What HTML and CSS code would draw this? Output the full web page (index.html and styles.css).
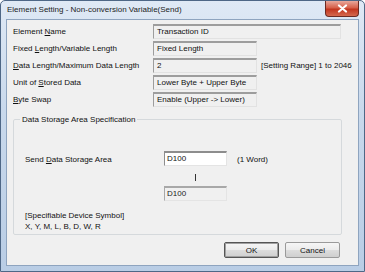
FILE: index.html
```html
<!DOCTYPE html>
<html lang="en">
<head>
  <meta charset="UTF-8" />
  <title>Element Setting - Non-conversion Variable(Send)</title>
  <link rel="stylesheet" href="styles.css">
</head>
<body>

  <div class="window">
    <div class="titlebar">
      <span class="title">Element Setting - Non-conversion Variable(Send)</span>
      <span class="close-btn">
        <svg width="11" height="9" viewBox="0 0 11 9">
          <path d="M2 1.5 L9 7.5 M9 1.5 L2 7.5" stroke="#fff" stroke-width="2.2" stroke-linecap="round" />
        </svg>
      </span>
    </div>

    <div class="client">
      <div class="settings">
        <div class="row">
          <span class="label">Element <u>N</u>ame</span>
          <span class="field wide">Transaction ID</span>
        </div>
        <div class="row">
          <span class="label">Fixed <u>L</u>ength/Variable Length</span>
          <span class="field">Fixed Length</span>
        </div>
        <div class="row">
          <span class="label"><u>D</u>ata Length/Maximum Data Length</span>
          <span class="field">2</span>
          <span class="note">[Setting Range] 1 to 2046</span>
        </div>
        <div class="row">
          <span class="label">Unit of <u>S</u>tored Data</span>
          <span class="field">Lower Byte + Upper Byte</span>
        </div>
        <div class="row">
          <span class="label"><u>B</u>yte Swap</span>
          <span class="field">Enable (Upper -&gt; Lower)</span>
        </div>
      </div>

      <fieldset class="group">
        <legend>Data Storage Area Specification</legend>
        <div class="storage">
          <span class="label">Send <u>D</u>ata Storage Area</span>
          <div class="device-col">
            <span class="edit">D100</span>
            <span class="bar"></span>
            <span class="edit disabled">D100</span>
          </div>
          <span class="note">(1 Word)</span>
        </div>
        <div class="symbols">
          [Specifiable Device Symbol]<br>
          X, Y, M, L, B, D, W, R
        </div>
      </fieldset>

      <div class="buttons">
        <button class="btn default">OK</button>
        <button class="btn">Cancel</button>
      </div>
    </div>
  </div>

</body>
</html>
```

FILE: styles.css
```css
body {
  margin: 0;
  font-family: 'Liberation Sans', Arial, sans-serif;
  font-size: 8px;
  color: #111;
  background: #fff;
}

.window {
  width: 365px;
  height: 272px;
  box-sizing: border-box;
  padding: 0 5px 5px 5px;
  border: 1px solid #4e6786;
  border-radius: 5px 5px 0 0;
  background: linear-gradient(to bottom, #dfe9f5 0%, #c9d9ec 40%, #b9cde5 100%);
  display: flex;
  flex-direction: column;
}

.titlebar {
  height: 18px;
  display: flex;
  align-items: center;
  justify-content: space-between;
}

.title {
  font-size: 8px;
  color: #1c1c1c;
  padding-left: 1px;
  margin-top: -1px;
}

.close-btn {
  width: 32px;
  height: 15px;
  margin-top: -3px;
  border: 1px solid #6b2a22;
  border-top: none;
  border-radius: 0 0 4px 4px;
  background: linear-gradient(to bottom, #e8a89c 0%, #d6604a 45%, #c2361f 55%, #d4694e 100%);
  display: flex;
  align-items: center;
  justify-content: center;
}

.client {
  flex: 1;
  background: #f0f0f0;
  border: 1px solid #8ea4bf;
  display: flex;
  flex-direction: column;
  padding: 4px 6px 0 6px;
}

.settings {
  display: flex;
  flex-direction: column;
  gap: 2px;
}

.row {
  display: flex;
  align-items: center;
  height: 15px;
  white-space: nowrap;
}

.label {
  width: 140px;
  flex-shrink: 0;
  white-space: nowrap;
}

.field {
  box-sizing: border-box;
  width: 104px;
  height: 15px;
  line-height: 12px;
  padding-left: 3px;
  border: 1px solid;
  border-color: #9d9d9d #e2e2e2 #e2e2e2 #9d9d9d;
  border-top-width: 2px;
  background: #f0f0f0;
  flex-shrink: 0;
}

.field.wide {
  width: 188px;
}

.note {
  margin-left: 4px;
  white-space: nowrap;
}

.group {
  margin: 8px 0 0 0;
  padding: 0 0 6px 11px;
  height: 120px;
  box-sizing: border-box;
  border: 1px solid #d5d9dc;
  border-radius: 2px;
  width: 329px;
}

.group legend {
  padding: 0 2px;
  margin-left: -5px;
}

.storage {
  display: flex;
  align-items: flex-start;
  margin-top: 27px;
}

.storage .label {
  width: 139px;
  margin-top: 4px;
}

.storage .note {
  margin-left: 10px;
  margin-top: 4px;
}

.device-col {
  display: flex;
  flex-direction: column;
  align-items: center;
}

.edit {
  box-sizing: border-box;
  width: 63px;
  height: 15px;
  line-height: 12px;
  padding-left: 2px;
  border: 1px solid;
  border-color: #8d8d8d #e4e4e4 #e4e4e4 #8d8d8d;
  border-top-width: 2px;
  background: #fff;
  align-self: stretch;
}

.edit.disabled {
  background: #f0f0f0;
  border-color: #a8a8a8 #e4e4e4 #e4e4e4 #a8a8a8;
  color: #222;
}

.bar {
  width: 1px;
  height: 7px;
  background: #333;
  margin: 8px 0 5px 0;
}

.symbols {
  margin-top: 9px;
  line-height: 11px;
}

.buttons {
  display: flex;
  justify-content: flex-end;
  gap: 6px;
  margin-top: 7px;
  padding-right: 12px;
}

.btn {
  width: 55px;
  height: 16px;
  padding: 0;
  font-family: 'Liberation Sans', Arial, sans-serif;
  font-size: 8px;
  color: #111;
  border: 1px solid #9a9a9a;
  border-radius: 2px;
  background: linear-gradient(to bottom, #f6f6f6 0%, #ebebeb 50%, #dddddd 51%, #cfcfcf 100%);
}

.btn.default {
  border: 1px solid #555;
  box-shadow: inset 0 0 0 1px #a0a0a0;
}
```
